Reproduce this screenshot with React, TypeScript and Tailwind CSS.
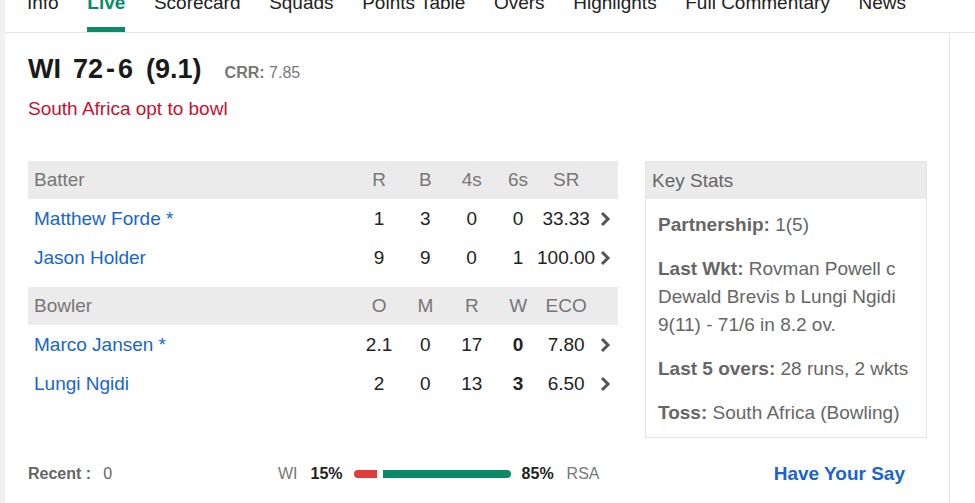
import React from 'react';

const tabs = ['Info', 'Live', 'Scorecard', 'Squads', 'Points Table', 'Overs', 'Highlights', 'Full Commentary', 'News'];

const batters = [
    { name: 'Matthew Forde *', v: ['1', '3', '0', '0', '33.33'] },
    { name: 'Jason Holder', v: ['9', '9', '0', '1', '100.00'] },
];

const bowlers = [
    { name: 'Marco Jansen *', v: ['2.1', '0', '17', '0', '7.80'] },
    { name: 'Lungi Ngidi', v: ['2', '0', '13', '3', '6.50'] },
];

function Chevron() {
    return (
        <svg width="12" height="16" viewBox="0 0 12 16" fill="none">
            <polyline points="3,2 9,8 3,14" stroke="#555" strokeWidth="3" strokeLinejoin="miter" />
        </svg>
    );
}

function Cell({ children, wide, bold }: { children: React.ReactNode; wide?: boolean; bold?: boolean }) {
    return (
        <div className={`${wide ? 'w-[50px]' : 'w-[46.5px]'} flex justify-center whitespace-nowrap ${bold ? 'font-bold' : ''}`}>
            {children}
        </div>
    );
}

function StatTable({ title, cols, rows, boldCol }: { title: string; cols: string[]; rows: { name: string; v: string[] }[]; boldCol?: number }) {
    return (
        <div className="flex flex-col">
            <div className="h-[38px] bg-[#ebebeb] flex items-center text-[#777]">
                <div className="w-[329px] pl-[6px]">{title}</div>
                {cols.map((c, i) => (
                    <Cell key={c} wide={i === 4}>{c}</Cell>
                ))}
                <div className="w-[27px]" />
            </div>
            {rows.map(r => (
                <div key={r.name} className="h-[39px] flex items-center text-[#222]">
                    <div className="w-[329px] pl-[6px] text-[#1866c8]">{r.name}</div>
                    {r.v.map((x, i) => (
                        <Cell key={i} wide={i === 4} bold={i === boldCol}>{x}</Cell>
                    ))}
                    <div className="w-[27px] flex items-center pl-[8px]">
                        <Chevron />
                    </div>
                </div>
            ))}
        </div>
    );
}

export default function App() {
    return (
        <div className="w-[975px] h-[503px] overflow-hidden flex bg-white font-['Liberation_Sans',Arial,sans-serif] text-[19px] leading-[22px]">
            <div className="w-[5px] shrink-0 bg-[#f0f1f3]" />
            <div className="flex-1 flex flex-col">
                {/* tabs */}
                <nav className="h-[33px] shrink-0 border-b border-[#e6e6e6] flex gap-[28.6px] pl-[22px] overflow-hidden">
                    {tabs.map(t => (
                        <div key={t} className="relative h-[32px] whitespace-nowrap">
                            <span className={`block -mt-[8px] ${t === 'Live' ? 'text-[#0a8a68] font-bold' : 'text-[#222]'}`}>{t}</span>
                            {t === 'Live' && <div className="absolute left-0 right-0 bottom-0 h-[5px] bg-[#0a8a68]" />}
                        </div>
                    ))}
                </nav>

                <div className="flex flex-1">
                    <div className="w-[945px] shrink-0 border-r border-[#e6e6e6] pl-[23px] flex flex-col">
                        {/* score */}
                        <div className="mt-[20px] flex items-baseline">
                            <div className="flex items-baseline text-[27px] leading-[32px] font-bold text-[#1a1a1a]">
                                <span>WI</span>
                                <span className="ml-[12px]">72</span>
                                <span className="ml-[3px]">-</span>
                                <span className="ml-[3px]">6</span>
                                <span className="ml-[13px]">(9.1)</span>
                            </div>
                            <span className="ml-[23px] text-[16px] text-[#777]">
                                <span className="font-bold">CRR:</span> 7.85
                            </span>
                        </div>
                        <div className="mt-[13px] text-[#c8102e]">South Africa opt to bowl</div>

                        {/* tables + key stats */}
                        <div className="mt-[41px] flex gap-[27px] items-start">
                            <div className="w-[590px] flex flex-col gap-[10px]">
                                <StatTable title="Batter" cols={['R', 'B', '4s', '6s', 'SR']} rows={batters} />
                                <StatTable title="Bowler" cols={['O', 'M', 'R', 'W', 'ECO']} rows={bowlers} boldCol={3} />
                            </div>
                            <div className="w-[282px] border border-[#e5e5e5] text-[#666]">
                                <div className="h-[37px] bg-[#ebebeb] flex items-center pl-[6px]">Key Stats</div>
                                <div className="px-[12px] pt-[12px] pb-[10px] flex flex-col gap-[16px] leading-[28px]">
                                    <p><b>Partnership:</b> 1(5)</p>
                                    <p><b>Last Wkt:</b> Rovman Powell c Dewald Brevis b Lungi Ngidi 9(11) - 71/6 in 8.2 ov.</p>
                                    <p><b>Last 5 overs:</b> 28 runs, 2 wkts</p>
                                    <p><b>Toss:</b> South Africa (Bowling)</p>
                                </div>
                            </div>
                        </div>

                        {/* bottom row */}
                        <div className="mt-[25px] flex items-center h-[22px]">
                            <div className="w-[250px] text-[16px] text-[#666]">
                                <span className="font-bold">Recent :</span>
                                <span className="ml-[12px]">0</span>
                            </div>
                            <div className="flex items-center text-[16px]">
                                <span className="text-[#777]">WI</span>
                                <span className="ml-[13px] font-bold text-[#222]">15%</span>
                                <div className="ml-[11px] w-[23px] h-[8px] rounded-l-full bg-[#e03c3c]" />
                                <div className="ml-[6px] w-[128px] h-[8px] rounded-r-full bg-[#0b8a67]" />
                                <span className="ml-[11px] font-bold text-[#222]">85%</span>
                                <span className="ml-[13px] text-[#777]">RSA</span>
                            </div>
                            <div className="ml-auto mr-[44px] font-bold text-[#1c63cf]">Have Your Say</div>
                        </div>
                    </div>
                    <div className="flex-1" />
                </div>
            </div>
        </div>
    );
}
